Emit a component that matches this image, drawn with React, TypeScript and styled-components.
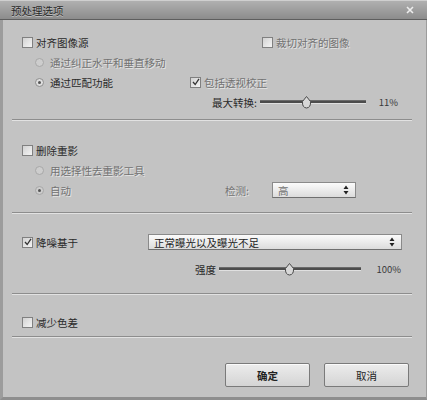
import React from "react";
import styled, { createGlobalStyle } from "styled-components";

const Global = createGlobalStyle`
  html, body { margin: 0; padding: 0; background: #c2c2c2; }
  body { font-family: "Noto Sans CJK SC", "Noto Sans", sans-serif; }
`;

const Dialog = styled.div`
  width: 427px;
  height: 400px;
  box-sizing: border-box;
  background: #c3c3c3;
  border-left: 3px solid #9c9c9c;
  border-right: 1px solid #9c9c9c;
  border-bottom: 3px solid #8e8e8e;
  display: flex;
  flex-direction: column;
  font-size: 10.5px;
  color: #2a2a2a;
`;

const TitleBar = styled.div`
  height: 20px;
  box-sizing: border-box;
  margin-left: -3px;
  margin-right: -1px;
  background: linear-gradient(#b0b0b0, #8c8c8c);
  border-top: 1px solid #cfcfcf;
  border-bottom: 1px solid #5e5e5e;
  display: flex;
  align-items: center;
  justify-content: space-between;
  padding: 0 12px 0 11px;
`;

const Title = styled.span`
  font-size: 10.5px;
  color: #2a2a2a;
  text-shadow: 0 1px 0 #c0c0c0;
`;

const Close = styled.span`
  width: 10px;
  height: 10px;
  display: flex;
  align-items: center;
  justify-content: center;
`;

const Body = styled.div`
  flex: 1;
  display: flex;
  flex-direction: column;
  padding: 0 11px 0 9px;
`;

const Section = styled.div<{ $top: number; $bottom: number; $gap?: number }>`
  display: flex;
  flex-direction: column;
  gap: ${(p) => p.$gap ?? 0}px;
  padding-top: ${(p) => p.$top}px;
  padding-bottom: ${(p) => p.$bottom}px;
`;

const Separator = styled.div`
  height: 1px;
  margin-right: 3px;
  background: #8d8d8d;
  border-bottom: 1px solid #e2e2e2;
`;

const Row = styled.div<{ $indent?: number; $h?: number }>`
  height: ${(p) => p.$h ?? 20}px;
  display: flex;
  align-items: center;
  padding-left: ${(p) => p.$indent ?? 0}px;
`;

const Cell = styled.div<{ $w?: number }>`
  display: flex;
  align-items: center;
  width: ${(p) => (p.$w ? `${p.$w}px` : "auto")};
  flex: ${(p) => (p.$w ? "none" : "1")};
`;

const Label = styled.span<{ $disabled?: boolean; $bold?: boolean }>`
  color: ${(p) => (p.$disabled ? "#727272" : "#2a2a2a")};
  text-shadow: ${(p) => (p.$disabled ? "1px 1px 0 #e4e4e4" : "none")};
  font-weight: ${(p) => (p.$bold ? 700 : 400)};
  white-space: nowrap;
`;

const Box = styled.span`
  width: 11px;
  height: 11px;
  box-sizing: border-box;
  border: 1px solid #808080;
  background: linear-gradient(135deg, #d2d2d2, #f4f4f4);
  margin-right: 3px;
  display: flex;
  align-items: center;
  justify-content: center;
`;

const Round = styled.span<{ $disabled?: boolean }>`
  width: 9px;
  height: 9px;
  border-radius: 50%;
  box-sizing: border-box;
  border: 1px solid ${(p) => (p.$disabled ? "#a8a8a8" : "#8e8e8e")};
  background: ${(p) => (p.$disabled ? "#cdcdcd" : "#dedede")};
  margin-right: 6px;
  display: flex;
  align-items: center;
  justify-content: center;
`;

const Dot = styled.span`
  width: 3px;
  height: 3px;
  border-radius: 50%;
  background: #555;
`;

const Check = ({ checked, children, disabled }: { checked?: boolean; children: React.ReactNode; disabled?: boolean }) => (
  <>
    <Box>
      {checked && (
        <svg width="8" height="8" viewBox="0 0 8 8">
          <path d="M1 4 L3.2 6.5 L7 0.8" stroke="#333" strokeWidth="1.3" fill="none" />
        </svg>
      )}
    </Box>
    <Label $disabled={disabled}>{children}</Label>
  </>
);

const Radio = ({ selected, children, disabled }: { selected?: boolean; children: React.ReactNode; disabled?: boolean }) => (
  <>
    <Round $disabled={disabled}>{selected && <Dot />}</Round>
    <Label $disabled={disabled}>{children}</Label>
  </>
);

const SliderWrap = styled.div<{ $w: number }>`
  position: relative;
  width: ${(p) => p.$w}px;
  height: 14px;
  margin-left: 3px;
  display: flex;
  align-items: center;
`;

const Track = styled.div`
  width: 100%;
  height: 2px;
  background: #4c4c4c;
  border-top: 1px solid #6a6a6a;
  border-bottom: 1px solid #e0e0e0;
`;

const Thumb = styled.svg`
  position: absolute;
  top: 1px;
  margin-left: -5px;
`;

const Slider = ({ width, value }: { width: number; value: number }) => (
  <SliderWrap $w={width}>
    <Track />
    <Thumb width="11" height="13" viewBox="0 0 11 13" style={{ left: `${value * 100}%` }}>
      <path d="M5.5 0.5 L9.5 5.5 Q10 11.5 5.5 12 Q1 11.5 1.5 5.5 Z" fill="#d8d8d8" stroke="#4a4a4a" strokeWidth="1" />
    </Thumb>
  </SliderWrap>
);

const Value = styled.span<{ $w: number }>`
  width: ${(p) => p.$w}px;
  text-align: right;
  font-size: 9.5px;
  color: #3a3a3a;
`;

const Select = styled.div<{ $w: number }>`
  width: ${(p) => p.$w}px;
  height: 16px;
  box-sizing: border-box;
  border: 1px solid #8a8a8a;
  border-bottom-color: #6f6f6f;
  background: linear-gradient(#fbfbfb, #dcdcdc);
  display: flex;
  align-items: center;
  justify-content: space-between;
  padding: 0 6px 0 5px;
  color: #222;
`;

const Arrows = () => (
  <svg width="6" height="10" viewBox="0 0 6 10">
    <path d="M3 0.5 L5.5 4 L0.5 4 Z M3 9.5 L5.5 6 L0.5 6 Z" fill="#222" />
  </svg>
);

const Footer = styled.div`
  display: flex;
  justify-content: flex-end;
  gap: 14px;
  padding-top: 25px;
  padding-right: 6px;
`;

const Button = styled.button<{ $primary?: boolean }>`
  width: 85px;
  height: 24px;
  border: 1px solid #7a7a7a;
  border-radius: 2px;
  background: linear-gradient(#ececec, #d4d4d4);
  box-shadow: inset 0 1px 0 #fafafa;
  font-family: inherit;
  font-size: 10.5px;
  font-weight: ${(p) => (p.$primary ? 700 : 400)};
  color: #222;
  padding: 0;
`;

export default function App() {
  return (
    <>
      <Global />
      <Dialog>
        <TitleBar>
          <Title>预处理选项</Title>
          <Close>
            <svg width="8" height="8" viewBox="0 0 8 8">
              <path d="M1 1 L7 7 M7 1 L1 7" stroke="#eeeeee" strokeWidth="1.6" />
            </svg>
          </Close>
        </TitleBar>
        <Body>
          <Section $top={12} $bottom={7}>
            <Row $indent={10}>
              <Cell $w={240}>
                <Check>对齐图像源</Check>
              </Cell>
              <Cell>
                <Check disabled>裁切对齐的图像</Check>
              </Cell>
            </Row>
            <Row $indent={23}>
              <Radio disabled>通过纠正水平和垂直移动</Radio>
            </Row>
            <Row $indent={23}>
              <Cell $w={155}>
                <Radio selected>通过匹配功能</Radio>
              </Cell>
              <Cell>
                <Check checked disabled>包括透视校正</Check>
              </Cell>
            </Row>
            <Row $indent={200}>
              <Label>最大转换:</Label>
              <Slider width={106} value={0.43} />
              <Value $w={32}>11%</Value>
            </Row>
          </Section>
          <Separator />
          <Section $top={19} $bottom={12}>
            <Row $indent={10}>
              <Check>删除重影</Check>
            </Row>
            <Row $indent={23}>
              <Radio disabled>用选择性去重影工具</Radio>
            </Row>
            <Row $indent={23}>
              <Cell $w={190}>
                <Radio selected disabled>自动</Radio>
              </Cell>
              <Cell $w={47}>
                <Label $disabled>检测:</Label>
              </Cell>
              <Select $w={84}>
                <Label $disabled>高</Label>
                <Arrows />
              </Select>
            </Row>
          </Section>
          <Separator />
          <Section $top={18} $bottom={14} $gap={7}>
            <Row $indent={10}>
              <Cell $w={126}>
                <Check checked>降噪基于</Check>
              </Cell>
              <Select $w={254}>
                <span>正常曝光以及曝光不足</span>
                <Arrows />
              </Select>
            </Row>
            <Row $indent={183}>
              <Label>强度</Label>
              <Slider width={142} value={0.49} />
              <Value $w={40}>100%</Value>
            </Row>
          </Section>
          <Separator />
          <Section $top={17} $bottom={4}>
            <Row $indent={10}>
              <Check>减少色差</Check>
            </Row>
          </Section>
          <Separator />
          <Footer>
            <Button $primary>确定</Button>
            <Button>取消</Button>
          </Footer>
        </Body>
      </Dialog>
    </>
  );
}
